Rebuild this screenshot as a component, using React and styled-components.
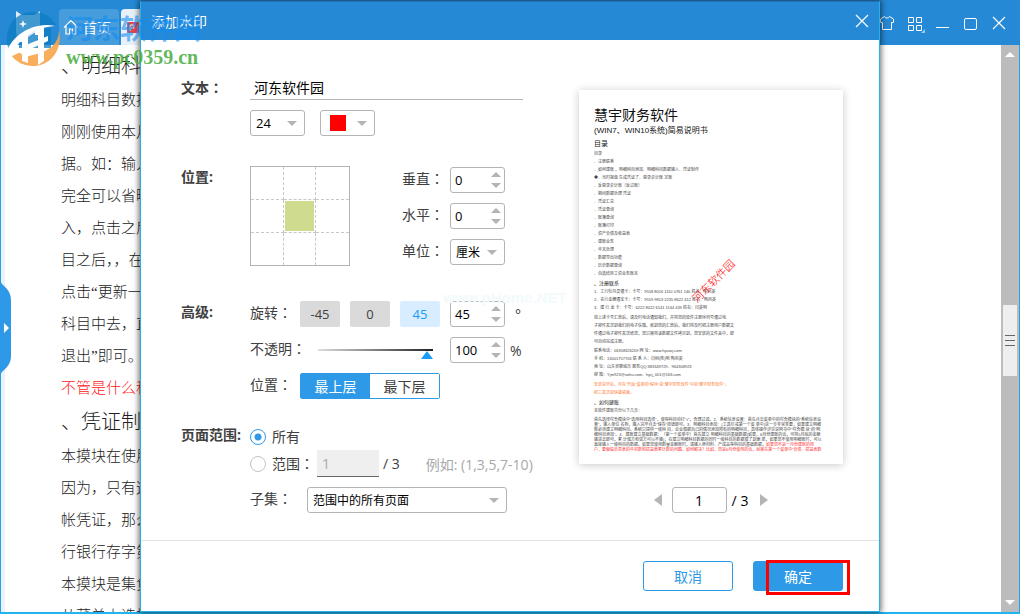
import React, { useState } from 'react'
import styled, { createGlobalStyle, css } from 'styled-components'

const GlobalStyle = createGlobalStyle`
    * {
        box-sizing: border-box;
    }
    body {
        margin: 0;
        overflow: hidden;
        background: #fff;
        color: #404040;
        font-family: "Open Sans", "Noto Sans CJK SC", sans-serif;
        font-size: 14px;
    }
    button, input, select {
        font-family: inherit;
        margin: 0;
        outline: none;
    }
`;

/* ---------- main window ---------- */

const Window = styled.div`
    position: relative;
    display: flex;
    flex-direction: column;
    height: 100vh;
    border-bottom: 2px solid #22b4ee;
`;

const TopBar = styled.header`
    display: flex;
    align-items: flex-end;
    height: 45px;
    flex-shrink: 0;
    padding-left: 16px;
    background: #2589d5;
    color: #fff;
`;

const AppLogo = styled.svg`
    width: 24px;
    height: 34px;
    margin-right: 19px;
`;

const Tab = styled.button`
    display: flex;
    align-items: center;
    gap: 4px;
    height: 36px;
    width: ${(p) => (p.$active ? '180px' : '60px')};
    padding: 0 4px;
    margin-right: 2px;
    border: 0;
    border-radius: 4px 4px 0 0;
    background: ${(p) => (p.$active ? '#e8f1fa' : '#479cdc')};
    color: #fff;
    font-size: 14px;
    white-space: nowrap;
`;

const WindowButtons = styled.div`
    display: flex;
    align-items: center;
    gap: 8px;
    height: 45px;
    margin-left: auto;
    padding-right: 11px;
`;

const IconButton = styled.button`
    display: flex;
    align-items: center;
    justify-content: center;
    width: 20px;
    height: 20px;
    padding: 0;
    border: 0;
    background: none;
    color: #fff;
`;

const Workspace = styled.div`
    display: flex;
    flex: 1;
    min-height: 0;
    border-left: 1px solid #28a0e8;
    border-right: 1px solid #28a0e8;
`;

const Gutter = styled.div`
    width: 4px;
    background: #eaf2fc;
`;

const SideHandle = styled.button`
    position: absolute;
    left: 0;
    top: 280px;
    width: 11px;
    height: 96px;
    padding: 0;
    border: 0;
    background: none;
`;

const Page = styled.article`
    flex: 1;
    min-width: 0;
    overflow: hidden;
    padding: 3px 0 0 56px;
    color: #222;
    font-family: "Liberation Serif", "Noto Sans CJK SC", serif;
    font-weight: 300;
    white-space: nowrap;
`;

const PageHeading = styled.h2`
    margin: 0;
    font-size: 20px;
    font-weight: 300;
    line-height: 36px;
`;

const PageLine = styled.p`
    margin: 0;
    font-size: 15px;
    line-height: 32px;
    color: ${(p) => (p.$red ? '#ff2020' : 'inherit')};
`;

const ScrollBar = styled.div`
    display: flex;
    flex-direction: column;
    justify-content: space-between;
    align-items: center;
    width: 18px;
    padding: 7px 0;
    background: #bcbcbc;
`;

const ScrollThumb = styled.div`
    display: flex;
    flex-direction: column;
    align-items: center;
    justify-content: center;
    gap: 4px;
    width: 14px;
    height: 71px;
    margin-top: 24px;
    background: #eee;
    i {
        width: 10px;
        height: 1px;
        background: #666;
    }
`;

const Triangle = styled.span`
    display: block;
    width: 0;
    height: 0;
    border: ${(p) => p.$size || 5}px solid transparent;
    ${(p) => p.$dir === 'up' && css`border-top: 0; border-bottom-color: ${p.$color || '#b4b4b4'};`}
    ${(p) => p.$dir === 'down' && css`border-bottom: 0; border-top-color: ${p.$color || '#b4b4b4'};`}
    ${(p) => p.$dir === 'left' && css`border-left: 0; border-right: 8px solid ${p.$color || '#b4b4b4'};`}
    ${(p) => p.$dir === 'right' && css`border-right: 0; border-left: 8px solid ${p.$color || '#b4b4b4'};`}
`;

/* ---------- dialog ---------- */

const Overlay = styled.div`
    position: absolute;
    inset: 1px 0 0;
    display: flex;
    justify-content: center;
    align-items: flex-start;
`;

const DialogBox = styled.section`
    width: min(740px, 100%);
    border: 1px solid #2ab0e8;
    border-top-color: #2373b0;
    background: #fff;
    box-shadow: 0 0 6px 1px rgba(0, 0, 0, 0.6);
`;

const DialogHeader = styled.header`
    display: flex;
    align-items: center;
    justify-content: space-between;
    height: 38px;
    padding: 0 7px 0 10px;
    background: #2589d5;
    color: #fff;
    h1 {
        margin: 0;
        font-size: 14px;
        font-weight: 400;
    }
`;

const DialogBody = styled.div`
    display: flex;
    padding: 36px 36px 27px 40px;
`;

const Form = styled.form`
    flex: 1;
`;

const Section = styled.fieldset`
    display: flex;
    min-width: 0;
    margin: 0 0 ${(p) => p.$gap || 0}px;
    padding: 0;
    border: 0;
`;

const SectionTitle = styled.span`
    width: 69px;
    font-weight: 700;
    line-height: 22px;
    white-space: nowrap;
`;

const Rows = styled.div`
    display: flex;
    flex-direction: column;
    gap: 10px;
`;

const Row = styled.div`
    display: flex;
    align-items: center;
    gap: ${(p) => p.$gap || 0}px;
    min-height: 26px;
`;

const Label = styled.label`
    align-self: ${(p) => (p.$middle ? 'center' : 'flex-start')};
    width: ${(p) => p.$width || 50}px;
    line-height: 22px;
    white-space: nowrap;
`;

/* full-width colon, centred in its square */
const ColonMark = styled.span`
    font-family: "Noto Sans CJK TC", sans-serif;
`;

const TextInput = styled.input`
    width: 273px;
    height: 24px;
    padding: 0 4px 2px;
    border: 0;
    border-bottom: 1px solid #b4b4b4;
    color: #000;
    font-size: 14px;
`;

const SelectWrap = styled.div`
    position: relative;
    width: ${(p) => p.$width}px;
    > span {
        position: absolute;
        right: 8px;
        top: 11px;
        pointer-events: none;
    }
`;

const Select = styled.select`
    display: block;
    appearance: none;
    width: 100%;
    height: 26px;
    padding: 0 5px;
    border: 1px solid #b4b4b4;
    border-radius: 3px;
    background: #fff;
    color: #000;
    font-size: ${(p) => p.$font || 12}px;
`;

const Swatch = styled.i`
    position: absolute;
    left: 10px;
    top: 5px;
    width: 16px;
    height: 16px;
    background: ${(p) => p.$color};
    pointer-events: none;
`;

const SpinBox = styled.div`
    display: flex;
    align-items: center;
    width: 55px;
    height: 26px;
    padding: 0 3px 0 4px;
    border: 1px solid #b4b4b4;
    border-radius: 3px;
    input {
        flex: 1;
        min-width: 0;
        height: 22px;
        padding: 0;
        border: 0;
        color: #000;
        font-size: 13px;
    }
`;

const SpinArrows = styled.div`
    display: flex;
    flex-direction: column;
    gap: 6px;
    button {
        padding: 0;
        border: 0;
        background: none;
    }
`;

const PositionGrid = styled.div`
    display: grid;
    grid-template-columns: repeat(3, 1fr);
    width: 100px;
    height: 100px;
    margin-right: 52px;
    border: 1px solid #b4b4b4;
`;

const PositionCell = styled.button`
    padding: 1px;
    border: 0;
    border-right: ${(p) => (p.$col < 2 ? '1px dashed #c8c8c8' : '0')};
    border-bottom: ${(p) => (p.$row < 2 ? '1px dashed #c8c8c8' : '0')};
    background: ${(p) => (p.$on ? '#cfdc8f' : '#fff')} content-box;
`;

const AngleButton = styled.button`
    width: 40px;
    height: 26px;
    padding: 0;
    border: 0;
    border-radius: 2px;
    background: ${(p) => (p.$on ? '#d8edff' : '#dadada')};
    color: ${(p) => (p.$on ? '#1b9af7' : '#404040')};
    font-size: 13px;
`;

const Slider = styled.input`
    appearance: none;
    width: 115px;
    height: 26px;
    margin: 0 17px 0 18px;
    background: none;
    &::-webkit-slider-runnable-track {
        height: 2px;
        background: linear-gradient(to right, #ddd, #222);
    }
    &::-webkit-slider-thumb {
        appearance: none;
        width: 12px;
        height: 8px;
        margin-top: 2px;
        background: #1b9af7;
        clip-path: polygon(50% 0, 100% 100%, 0 100%);
    }
`;

const Segments = styled.div`
    display: flex;
    width: 140px;
    height: 26px;
    border: 1px solid #2e99e6;
    border-radius: 2px;
`;

const Segment = styled.button`
    flex: 1;
    padding: 0;
    border: 0;
    background: ${(p) => (p.$on ? '#2e99e6' : '#fff')};
    color: ${(p) => (p.$on ? '#fff' : '#404040')};
    font-size: 14px;
`;

const Radio = styled.input`
    appearance: none;
    width: 16px;
    height: 16px;
    margin-right: 6px;
    border: 1px solid #c4c4c4;
    border-radius: 50%;
    &:checked {
        border-color: #2e99e6;
        background: radial-gradient(circle, #2e99e6 3px, #fff 4px);
    }
`;

const RangeInput = styled.input`
    width: 62px;
    height: 27px;
    margin-right: 4px;
    padding: 0 5px;
    border: 0;
    border-bottom: 1px solid #666;
    background: #efefef;
    color: #a8a8a8;
    font-size: 14px;
`;

const Hint = styled.span`
    margin-left: 26px;
    color: #a8a8a8;
`;

/* ---------- preview ---------- */

const PreviewColumn = styled.div`
    display: flex;
    flex-direction: column;
    align-items: center;
    width: 264px;
    padding-top: 14px;
`;

const Sheet = styled.div`
    position: relative;
    width: 100%;
    aspect-ratio: 264 / 374;
    overflow: hidden;
    padding: 16px 0 0 15px;
    background: #fff;
    color: #333;
    font-family: "Liberation Sans", "Noto Sans CJK SC", sans-serif;
    white-space: nowrap;
`;

const SheetShadow = styled.div`
    width: 100%;
    margin-bottom: 23px;
    box-shadow: 0 1px 8px rgba(0, 0, 0, 0.22);
`;

const SheetTitle = styled.div`
    color: #111;
    font-size: ${(p) => p.$size}px;
    line-height: ${(p) => p.$line}px;
`;

const SheetGroup = styled.div`
    margin-bottom: ${(p) => p.$gap || 0}px;
    color: ${(p) => p.$color || '#444'};
    font-size: 4px;
    line-height: ${(p) => p.$line || 8}px;
`;

const Stamp = styled.div`
    position: absolute;
    left: 107px;
    top: 184px;
    color: #f00;
    font-size: 11px;
    font-weight: 300;
    line-height: 14px;
    transform: rotate(-45deg);
`;

const Pager = styled.div`
    display: flex;
    align-items: center;
    height: 26px;
    color: #000;
    button {
        padding: 0;
        border: 0;
        background: none;
    }
    input {
        width: 55px;
        height: 26px;
        margin: 0 5px 0 10px;
        border: 1px solid #b4b4b4;
        border-radius: 3px;
        font-size: 14px;
        text-align: center;
    }
    label {
        margin-right: 12px;
    }
`;

const DialogFooter = styled.footer`
    display: flex;
    justify-content: flex-end;
    gap: 20px;
    padding: 20px 36px;
    border-top: 1px solid #e2e2e2;
`;

const ActionButton = styled.button`
    width: 90px;
    height: 30px;
    padding: 0;
    border: 1px solid #2e99e6;
    border-radius: 3px;
    background: ${(p) => (p.$primary ? '#2e99e6' : '#fff')};
    color: ${(p) => (p.$primary ? '#fff' : '#2e99e6')};
    font-size: 14px;
`;

const Highlighted = styled.div`
    position: relative;
    &::after {
        content: "";
        position: absolute;
        inset: -1px -7px -4px 13px;
        border: 3px solid #f00;
        pointer-events: none;
    }
`;

/* ---------- site marks drawn over everything ---------- */

const SiteMark = styled.div`
    position: absolute;
    left: 5px;
    top: 11px;
    display: flex;
    gap: 5px;
    pointer-events: none;
    white-space: nowrap;
    svg {
        width: 56px;
        height: 56px;
    }
`;

const SiteName = styled.div`
    color: rgba(20, 140, 240, 0.6);
    font-size: 27px;
    font-weight: 700;
    line-height: 36px;
`;

const SiteUrl = styled.div`
    color: rgba(72, 172, 62, 0.85);
    font-family: "Liberation Serif", serif;
    font-size: 20px;
    font-weight: 700;
    line-height: 20px;
`;

const FaintMark = styled.div`
    position: absolute;
    left: 443px;
    top: 288px;
    color: #f2fafb;
    font-family: "Liberation Sans", sans-serif;
    font-size: 15px;
    font-weight: 700;
    line-height: 20px;
    pointer-events: none;
`;

const pageTop = [
    '明细科目数据',
    '刚刚使用本月',
    '据。如：输入',
    '完全可以省略',
    '入，点击之后',
    '目之后，，在',
    '点击“更新一',
    '科目中去，直',
    '退出”即可。',
];

const pageBottom = ['本摸块在使用', '因为，只有这', '帐凭证，那么', '行银行存字第', '本摸块是集负', '从菜单上选择'];

const contents = [
    '目录',
    '、注册联系',
    '、如何建账 ，明细科目添加、明细科目数据输入、凭证制作',
    '◆、当时报盘 生成凭证了、登录会计账 定账',
    '、反登录会计账（反过账）',
    '、期间数据处理 凭证',
    '、凭证汇总',
    '、凭证查询',
    '、账簿查询',
    '、账簿打印',
    '、资产负债及收益表',
    '、建账业务',
    '、年末处理',
    '、数据导出功能',
    '、历史数据查询',
    '、自选结转工资业务账本',
];

const cards = [
    '1、工行牡丹灵通卡：卡号：9558 8016 1110 0761 140 姓名：陶凤英',
    '2、农行金穗通宝卡：卡号：9559 9813 2235 8622 412 姓名：陶凤英',
    '3、建 行 龙 卡：卡号：6222 8022 6141 1144 439 姓名：闫英明',
];

const notice = [
    '按上述卡号汇款后，请及时电话通知我们，并将您的软件注册序列号通过电',
    '子邮件发送到我们的电子信箱，收到您的汇款后，我们将及时把注册用户数据文',
    '件通过电子邮件发送给您，您只需将该数据文件拷贝到，您安装的文件夹中，即',
    '可自动完成注册。',
];

const contact = [
    '联系电话：06358326209 网 址：www.hyuarj.com',
    '手 机：13001757703 联 系 人：闫树(陈)明 陶凤英',
    '地 址：山东省聊城市 服务QQ:383349729、964308923',
    '邮 箱：Yjm923@sohu.com、hyrj_001@163.com',
];

const steps = [
    '首先选择综合模块中“选用科目选择”，使得科目动打“√”，合理过滤。2、系统信息设置：首先点击菜单中的综合模块的“系统信息设',
    '置”，输入单位 名称，输入完毕点击“保存”按钮即可。3、明细科目添加：(工具栏或第一个菜 单中)这一步非常重要，如果建立明细',
    '账必须建立明细科目。系统只提供一级科 目，企业根据自己的情况添加所有的明细科目，具体操作详见说明书中“综合模 块”的“明',
    '细科目添加”。4、建账建立基础数据：（第一个菜单中）首先建立 明细科目的基础数据(如果，6月份建账的话，可将5月底的金额',
    '输进去即可，累 计借方和贷方可以不输)；在建立明细科目数据的同时一级科目的数据很了到更 新，如果您不使用明细账时，可以',
];

const Colon = () => <ColonMark>：</ColonMark>

const Close = () => (
    <svg width="14" height="14" viewBox="0 0 14 14" fill="none" stroke="currentColor" strokeWidth="1.2">
        <path d="M1 1l12 12M13 1L1 13" />
    </svg>
);

function Spinner({ id, value, label }) {
    const [n, setN] = useState(value);
    return (
        <SpinBox>
            <input id={id} aria-label={label} value={n} onChange={(e) => setN(e.target.value)} />
            <SpinArrows>
                <button type="button" aria-label="+" onClick={() => setN(Number(n) + 1)}>
                    <Triangle $dir="up" />
                </button>
                <button type="button" aria-label="-" onClick={() => setN(Number(n) - 1)}>
                    <Triangle $dir="down" />
                </button>
            </SpinArrows>
        </SpinBox>
    )
}

function SheetLines({ lines, ...rest }) {
    return (
        <SheetGroup {...rest}>
            {lines.map((t) => <div key={t}>{t}</div>)}
        </SheetGroup>
    )
}

const RedText = styled.span`
    color: #ff3030;
`;

function Preview() {
    return (
        <PreviewColumn>
            <SheetShadow>
                <Sheet>
                    <SheetTitle $size={14} $line={18}>慧宇财务软件</SheetTitle>
                    <SheetTitle $size={8} $line={14}>(WIN7、WIN10系统)简易说明书</SheetTitle>
                    <SheetTitle $size={7} $line={12}>目录</SheetTitle>
                    <SheetLines lines={contents} />
                    <SheetTitle $size={5} $line={10}>、注册联系</SheetTitle>
                    <SheetLines lines={cards} $gap={2} />
                    <SheetLines lines={notice} $gap={1} />
                    <SheetLines lines={contact} $gap={2} />
                    <SheetLines
                        lines={['安装完毕后，可在“开始”菜单的“程序”或“慧宇财务软件”中的“慧宇财务软件”。', '把它发送到快捷桌面。']}
                        $color="#ff7a30"
                    />
                    <SheetTitle $size={5} $line={10}>、如何建账</SheetTitle>
                    <SheetGroup $gap={2}>本软件建账共分以下几步：</SheetGroup>
                    <SheetLines lines={steps} $line={5} />
                    <SheetGroup $line={5}>
                        直接输入一级科目的数据。如果您使用数量金额账时，请输入原材料、产成品等科目的基础数据，
                        <RedText>如果您不是一月份建账的用</RedText>
                    </SheetGroup>
                    <SheetGroup $line={5} $color="#ff3030">
                        户，要面临负责表的年初数和损益表累计数的问题，如何解决？比如，您是6月份使用的话，就需在第一个菜单中“负债、损益表数
                    </SheetGroup>
                    <Stamp>河东软件园</Stamp>
                </Sheet>
            </SheetShadow>
            <Pager>
                <button type="button" aria-label="上一页"><Triangle $dir="left" $size={6} /></button>
                <input id="pageNo" defaultValue="1" />
                <label htmlFor="pageNo">/ 3</label>
                <button type="button" aria-label="下一页"><Triangle $dir="right" $size={6} /></button>
            </Pager>
        </PreviewColumn>
    )
}

function WatermarkForm() {
    const [cell, setCell] = useState(4);
    const [angle, setAngle] = useState(45);
    const [layer, setLayer] = useState('top');

    return (
        <Form>
            <Section $gap={30}>
                <SectionTitle as="label" htmlFor="text">文本<Colon /></SectionTitle>
                <Rows>
                    <TextInput id="text" defaultValue="河东软件园" />
                    <Row $gap={15}>
                        <SelectWrap $width={55}>
                            <Select aria-label="字号" $font={13}><option>24</option></Select>
                            <Triangle $dir="down" />
                        </SelectWrap>
                        <SelectWrap $width={55}>
                            <Select aria-label="颜色"><option value="red" aria-label="红色"></option></Select>
                            <Swatch $color="#f00" />
                            <Triangle $dir="down" />
                        </SelectWrap>
                    </Row>
                </Rows>
            </Section>

            <Section $gap={35}>
                <SectionTitle>位置:</SectionTitle>
                <Row>
                    <PositionGrid>
                        {[0, 1, 2, 3, 4, 5, 6, 7, 8].map((i) => (
                            <PositionCell
                                key={i}
                                type="button"
                                aria-label={`位置 ${i + 1}`}
                                $col={i % 3}
                                $row={Math.floor(i / 3)}
                                $on={cell === i}
                                onClick={() => setCell(i)}
                            />
                        ))}
                    </PositionGrid>
                    <Rows>
                        <Row><Label htmlFor="vert" $width={48}>垂直<Colon /></Label><Spinner id="vert" value="0" /></Row>
                        <Row><Label htmlFor="horz" $width={48}>水平<Colon /></Label><Spinner id="horz" value="0" /></Row>
                        <Row>
                            <Label htmlFor="unit" $width={48}>单位<Colon /></Label>
                            <SelectWrap $width={55}>
                                <Select id="unit"><option>厘米</option></Select>
                                <Triangle $dir="down" />
                            </SelectWrap>
                        </Row>
                    </Rows>
                </Row>
            </Section>

            <Section $gap={25}>
                <SectionTitle>高级:</SectionTitle>
                <Rows>
                    <Row>
                        <Label htmlFor="angle">旋转<Colon /></Label>
                        <Row $gap={10}>
                            {[-45, 0, 45].map((a) => (
                                <AngleButton key={a} type="button" $on={a === angle} onClick={() => setAngle(a)}>{a}</AngleButton>
                            ))}
                            <Spinner id="angle" value="45" />
                            <span>°</span>
                        </Row>
                    </Row>
                    <Row>
                        <Label htmlFor="opacity">不透明<Colon /></Label>
                        <Slider id="opacity" type="range" defaultValue="100" />
                        <Row $gap={5}>
                            <Spinner label="不透明" value="100" />
                            <span>%</span>
                        </Row>
                    </Row>
                    <Row>
                        <Label as="span">位置<Colon /></Label>
                        <Segments>
                            <Segment type="button" $on={layer === 'top'} onClick={() => setLayer('top')}>最上层</Segment>
                            <Segment type="button" $on={layer === 'bottom'} onClick={() => setLayer('bottom')}>最下层</Segment>
                        </Segments>
                    </Row>
                </Rows>
            </Section>

            <Section>
                <SectionTitle>页面范围:</SectionTitle>
                <Rows>
                    <div>
                        <Row>
                            <Radio type="radio" name="range" id="all" defaultChecked />
                            <Label htmlFor="all" $middle>所有</Label>
                        </Row>
                        <Row>
                            <Radio type="radio" name="range" id="part" />
                            <Label htmlFor="part" $width={45} $middle>范围<Colon /></Label>
                            <RangeInput aria-label="范围" defaultValue="1" disabled />
                            <span>/ 3</span>
                            <Hint>例如: (1,3,5,7-10)</Hint>
                        </Row>
                    </div>
                    <Row>
                        <Label htmlFor="subset" $width={57}>子集<Colon /></Label>
                        <SelectWrap $width={200}>
                            <Select id="subset"><option>范围中的所有页面</option></Select>
                            <Triangle $dir="down" />
                        </SelectWrap>
                    </Row>
                </Rows>
            </Section>
        </Form>
    )
}

export default function App() {
    return (
        <Window>
            <GlobalStyle />
            <TopBar>
                <AppLogo viewBox="0 0 24 34">
                    <path d="M0 0l6 4h12l6-4v20c0 8-5 12-12 14C5 32 0 28 0 20z" fill="#fff" fillOpacity=".85" />
                </AppLogo>
                <Tab type="button">
                    <svg width="16" height="16" viewBox="0 0 16 16" fill="none" stroke="currentColor" strokeWidth="1.2">
                        <path d="M1 8.500L8 1.500l7 7M3 7v8h3.500v-5h3v5H13V7" />
                    </svg>
                    首页
                </Tab>
                <Tab type="button" $active aria-label="PDF">
                    <svg width="14" height="14" viewBox="0 0 14 14">
                        <rect x="2" y="2" width="12" height="11" rx="1" fill="#e8474a" />
                        <path d="M5 11V5h4v3H5" fill="none" stroke="#fff" />
                    </svg>
                </Tab>
                <WindowButtons>
                    <IconButton aria-label="皮肤">
                        <svg width="16" height="16" viewBox="0 0 16 16" fill="none" stroke="currentColor">
                            <path d="M5.500 1.500L1.500 4v3.500h2v7h9v-7h2V4l-4-2.500c-.5 2-4.500 2-5 0z" />
                        </svg>
                    </IconButton>
                    <IconButton aria-label="菜单">
                        <svg width="20" height="20" viewBox="0 0 20 20" fill="none" stroke="currentColor">
                            <path d="M3.500 4.500h5v5h-5zM11.500 4.500h5v5h-5zM3.500 12.500h5v5h-5zM11.500 12.500h5v5h-5z" />
                            <path d="M20 16v4h-4z" fill="#9cc9ee" stroke="none" />
                        </svg>
                    </IconButton>
                    <IconButton aria-label="最小化">
                        <svg width="14" height="14" viewBox="0 0 14 14" stroke="currentColor">
                            <path d="M0 11.500h13" />
                        </svg>
                    </IconButton>
                    <IconButton aria-label="最大化">
                        <svg width="14" height="14" viewBox="0 0 14 14" fill="none" stroke="currentColor">
                            <rect x=".5" y="2.500" width="12" height="11" rx="1.500" />
                        </svg>
                    </IconButton>
                    <IconButton aria-label="关闭"><Close /></IconButton>
                </WindowButtons>
            </TopBar>
            <Workspace>
                <Gutter />
                <Page>
                    <PageHeading>、明细科</PageHeading>
                    {pageTop.map((t) => <PageLine key={t}>{t}</PageLine>)}
                    <PageLine $red>不管是什么科</PageLine>
                    <PageHeading>、凭证制</PageHeading>
                    {pageBottom.map((t) => <PageLine key={t}>{t}</PageLine>)}
                </Page>
                <ScrollBar>
                    <Triangle $dir="up" $color="#fff" />
                    <ScrollThumb><i /><i /><i /></ScrollThumb>
                    <Triangle $dir="down" $color="#fff" />
                </ScrollBar>
            </Workspace>
            <SideHandle type="button" aria-label="展开">
                <svg width="11" height="96" viewBox="0 0 11 96">
                    <path d="M0 0c1 6 11 8 11 20v56c0 12-10 14-11 20z" fill="#2e99e6" />
                    <path d="M4 43l5 5-5 5z" fill="#fff" />
                </svg>
            </SideHandle>

            <Overlay>
                <DialogBox role="dialog" aria-label="添加水印">
                    <DialogHeader>
                        <h1>添加水印</h1>
                        <IconButton type="button" aria-label="关闭"><Close /></IconButton>
                    </DialogHeader>
                    <DialogBody>
                        <WatermarkForm />
                        <Preview />
                    </DialogBody>
                    <DialogFooter>
                        <ActionButton type="button">取消</ActionButton>
                        <Highlighted>
                            <ActionButton type="button" $primary>确定</ActionButton>
                        </Highlighted>
                    </DialogFooter>
                </DialogBox>
            </Overlay>

            <SiteMark>
                <svg viewBox="0 0 56 56">
                    <path d="M2 30C1 12 13 1 28 1c11 0 19 5 23 13C36 14 20 20 4 40 3 37 2 33 2 30z" fill="#0c7cc0" fillOpacity=".75" />
                    <path d="M14 34C22 25 34 18 46 17v20H14z" fill="#0c7cc0" fillOpacity=".75" />
                    <path d="M54 20c4 18-8 35-26 35-9 0-17-4-22-11l8-3 6 5 12-3c12-3 22-11 22-23z" fill="#f7a54a" fillOpacity=".9" />
                    <path d="M1 45C3 27 27 10 50 15c-16 1-33 8-40 24l8 1L5 46z" fill="#fff" />
                    <path d="M15 27l8-5v30l-6-2V31h-2zM30 20l9-5v35l-6 4V24h-3z" fill="#fff" />
                    <path d="M21 34l22-9v5l-22 10z" fill="#fff" />
                    <path d="M18 9l1 3 3 1-3 1-1 3-1-3-3-1 3-1z" fill="#fff" />
                </svg>
                <div>
                    <SiteName>河东软件园</SiteName>
                    <SiteUrl>www.pc0359.cn</SiteUrl>
                </div>
            </SiteMark>
            <FaintMark>www.pHome.NET</FaintMark>
        </Window>
    )
}
